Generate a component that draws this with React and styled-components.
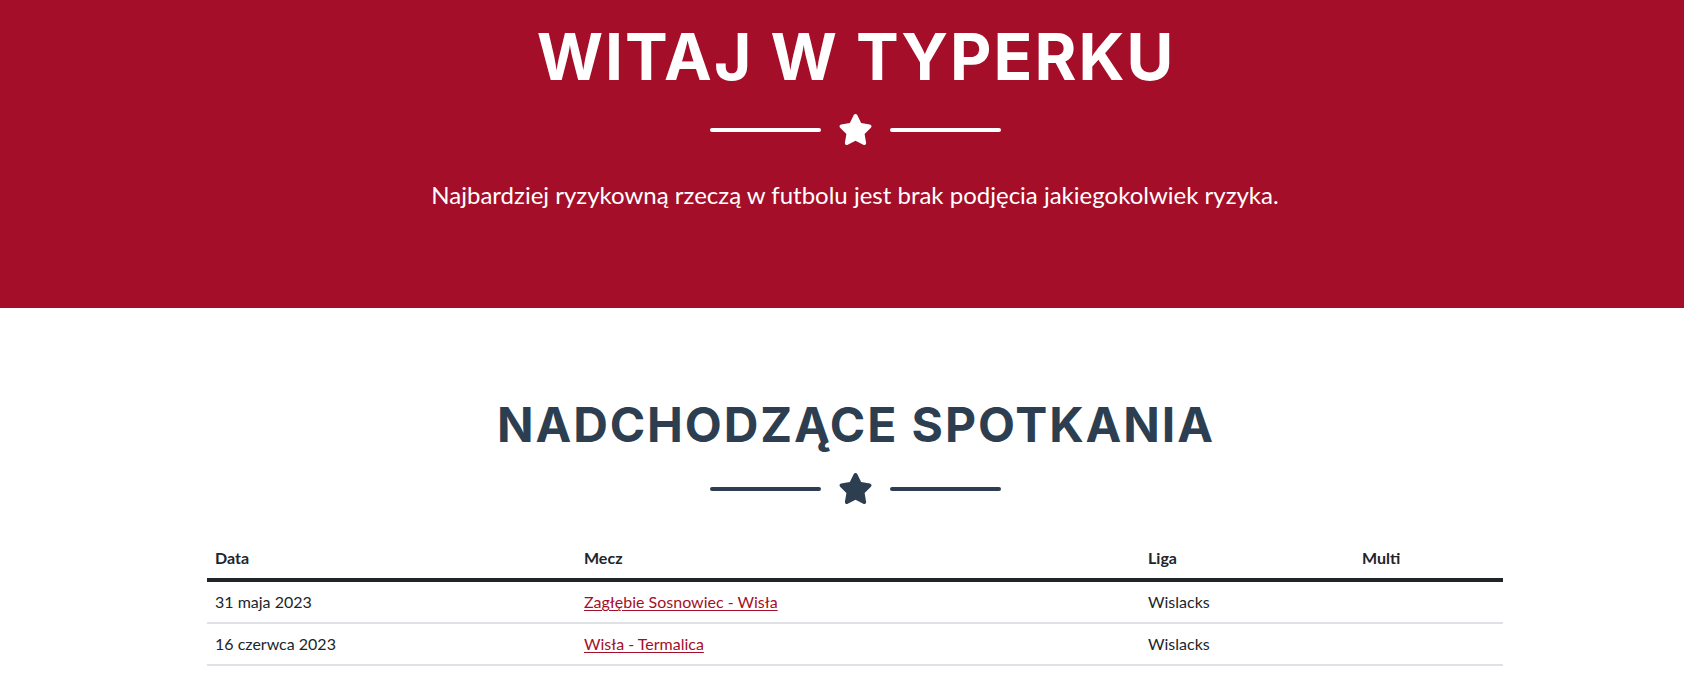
import React from "react";
import styled, { createGlobalStyle } from "styled-components";

const Global = createGlobalStyle`
  html, body { margin: 0; padding: 0; background: #fff; }
  body { font-family: Lato, "Open Sans", sans-serif; font-size: 16px; line-height: 1.5; color: #212529; }
  * { box-sizing: border-box; }
`;

const RED = "#a50e28";
const DARK = "#2c3e50";

const Masthead = styled.header`
  background: ${RED};
  color: #fff;
  height: 308px;
  padding-top: 18px;
`;

const Container = styled.div`
  width: 1296px;
  margin: 0 auto;
  position: relative;
  left: 13px;
  display: flex;
  flex-direction: column;
  align-items: center;
`;

const Heading = styled.h1`
  margin: 0;
  font-family: Inter, "Open Sans", sans-serif;
  font-weight: 700;
  text-transform: uppercase;
  color: ${(p) => p.$color};
  font-size: ${(p) => p.$size}px;
  line-height: ${(p) => p.$lh}px;
  letter-spacing: ${(p) => p.$ls}px;
  padding-left: ${(p) => p.$ls}px;
`;

const Divider = styled.div`
  display: flex;
  align-items: center;
  justify-content: center;
  gap: 17px;
  margin-top: ${(p) => p.$mt}px;
  color: ${(p) => p.$color};
`;

const Line = styled.span`
  display: block;
  width: 111px;
  height: 4px;
  border-radius: 1rem;
  background: currentColor;
`;

const StarSvg = styled.svg`
  width: 35px;
  height: 31px;
  display: block;
`;

const Star = () => (
  <StarSvg viewBox="0 0 576 512" fill="currentColor">
    <path d="M316.9 18C311.6 7 300.4 0 288.1 0s-23.4 7-28.8 18L195 150.3 51.4 171.5c-12 1.8-22 10.2-25.7 21.7s-.7 24.2 7.9 32.7L137.8 329 113.2 474.7c-2 12 3 24.2 12.9 31.3s23 8 33.8 2.3l128.3-68.5 128.3 68.5c10.8 5.7 23.9 4.9 33.8-2.3s14.9-19.3 12.9-31.3L438.5 329 542.7 225.9c8.6-8.5 11.7-21.2 7.9-32.7s-13.7-19.9-25.7-21.7L381.2 150.3 316.9 18z" />
  </StarSvg>
);

const Subheading = styled.p`
  margin: 32px 0 0;
  font-family: Lato, sans-serif;
  font-size: 24px;
  line-height: 36px;
  font-weight: 400;
`;

const Section = styled.section`
  padding-top: 97px;
`;

const Table = styled.table`
  width: 100%;
  border-collapse: collapse;
  margin-top: 34px;
  font-family: Lato, sans-serif;
  font-size: 16px;
  color: #212529;
  table-layout: fixed;
`;

const Th = styled.th`
  text-align: left;
  font-weight: 700;
  padding: 8px;
  line-height: 24px;
  border-bottom: 4px solid #212529;
  width: ${(p) => p.$w}px;
`;

const Td = styled.td`
  padding: 8px;
  line-height: 24px;
  border-bottom: 2px solid #dee2e6;
`;

const MatchLink = styled.a`
  color: ${RED};
  text-decoration: underline;
  text-decoration-thickness: 1px;
  text-underline-offset: 2px;
`;

const rows = [
  { date: "31 maja 2023", match: "Zagłębie Sosnowiec - Wisła", league: "Wislacks" },
  { date: "16 czerwca 2023", match: "Wisła - Termalica", league: "Wislacks" },
];

export default function App() {
  return (
    <>
      <Global />
      <Masthead>
        <Container>
          <Heading $color="#fff" $size={64} $lh={77} $ls={2}>Witaj w Typerku</Heading>
          <Divider $mt={19} $color="#fff">
            <Line />
            <Star />
            <Line />
          </Divider>
          <Subheading>Najbardziej ryzykowną rzeczą w futbolu jest brak podjęcia jakiegokolwiek ryzyka.</Subheading>
        </Container>
      </Masthead>
      <Section>
        <Container>
          <Heading $color={DARK} $size={48} $lh={40} $ls={1.9}>Nadchodzące spotkania</Heading>
          <Divider $mt={28} $color={DARK}>
            <Line />
            <Star />
            <Line />
          </Divider>
          <Table>
            <thead>
              <tr>
                <Th $w={369}>Data</Th>
                <Th $w={564}>Mecz</Th>
                <Th $w={214}>Liga</Th>
                <Th $w={149}>Multi</Th>
              </tr>
            </thead>
            <tbody>
              {rows.map((r) => (
                <tr key={r.match}>
                  <Td>{r.date}</Td>
                  <Td><MatchLink href="#">{r.match}</MatchLink></Td>
                  <Td>{r.league}</Td>
                  <Td></Td>
                </tr>
              ))}
            </tbody>
          </Table>
        </Container>
      </Section>
    </>
  );
}
